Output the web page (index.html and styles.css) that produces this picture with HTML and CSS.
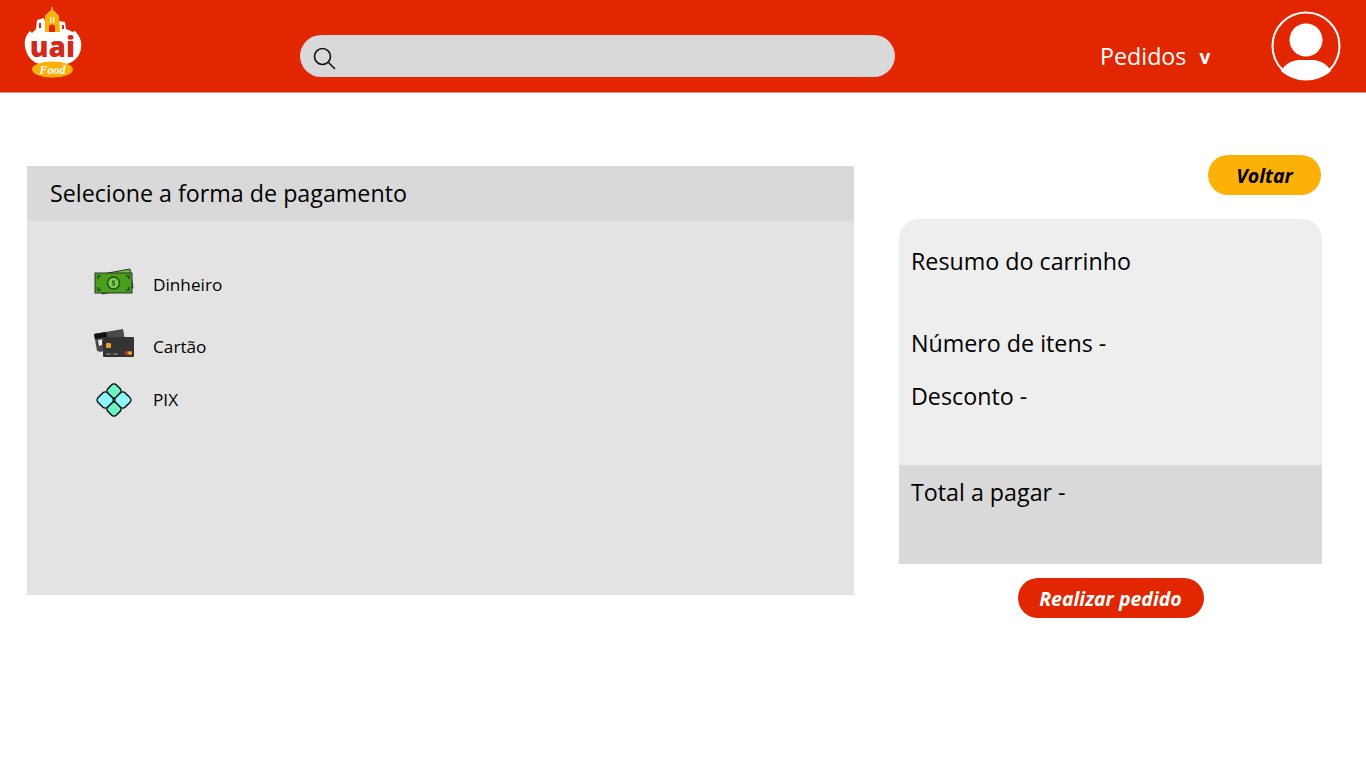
FILE: index.html
```html
<!DOCTYPE html>
<html lang="pt-BR">
<head>
    <meta charset="UTF-8">
    <title>UaiFood - Pagamento</title>
    <link rel="stylesheet" href="styles.css">
</head>
<body>
    <header class="topbar">
        <svg class="logo" width="60" height="74" viewBox="0 0 60 74">
            <!-- cidade + base branca -->
            <path fill="#fff" d="M1 42C0 35 2 30 6 26L8 28L12 24L13 15L20 13L21 17L21 11L25 7L27.500 5L27.500 2L28.500 2L28.500 5L31 7L35 11L35 16L41 17L42 24L47 26L48 27L51 26C56 31 58 37 57 43C56 53 48 61 28.500 61C9 61 3 52 1 42Z"/>
            <path fill="#fbb108" d="M21 11L28 4L35 11L36 27L21 27Z"/>
            <path fill="#e12600" d="M25 27L25 22.500A3 3 0 0 1 31 22.500L31 27Z"/>
            <path fill="#fff" d="M26 12H27.300V18H26ZM29 12H30.300V18H29Z"/>
            <path fill="#e12600" d="M15 18H17V23H15ZM38 20H40V24H38Z"/>
            <ellipse cx="28.500" cy="64.500" rx="20.500" ry="8" fill="#fbb108"/>
            <text class="logo-uai" x="28.500" y="52" text-anchor="middle">uai</text>
            <text class="logo-food" x="28.500" y="68.500" text-anchor="middle">Food</text>
        </svg>
        <div class="search">
            <svg width="24" height="24" viewBox="0 0 24 24" fill="none" stroke="#111" stroke-width="1.600">
                <circle cx="10.500" cy="10.500" r="8"/>
                <path d="M16.500 16.500L23 23"/>
            </svg>
        </div>
        <div class="orders">
            <span>Pedidos</span>
            <span class="orders-arrow">v</span>
        </div>
        <svg class="avatar" width="70" height="70" viewBox="0 0 70 70">
            <circle cx="35" cy="35" r="33.500" fill="none" stroke="#fff" stroke-width="2"/>
            <circle cx="35" cy="29" r="16.500" fill="#fff"/>
            <path fill="#fff" d="M10 60C14 53 20 50 27 49H43C50 50 56 53 60 60C54 66 45 68 35 68C25 68 16 66 10 60Z"/>
        </svg>
    </header>

    <main class="content">
        <section class="payment">
            <h2 class="payment-title">Selecione a forma de pagamento</h2>
            <ul class="payment-list">
                <li class="payment-item item-cash">
                    <svg width="40" height="28" viewBox="0 0 40 28">
                        <path fill="#6fbf3f" stroke="#333" d="M3 7L36 1L39 20L8 26Z"/>
                        <rect x="1" y="5" width="37" height="20" fill="#4a9e1e" stroke="#333"/>
                        <circle cx="19.500" cy="15" r="6" fill="#7ccb4a" stroke="#1f4d10" stroke-width="1.500"/>
                        <path fill="none" stroke="#1f4d10" stroke-width="1.500" d="M4 11V8H7M32 8H35V11M35 19V22H32M7 22H4V19"/>
                        <path fill="none" stroke="#1f4d10" d="M21 13H18.500V15H20.500V17H18"/>
                    </svg>
                    <span>Dinheiro</span>
                </li>
                <li class="payment-item item-card">
                    <svg width="42" height="30" viewBox="0 0 42 30">
                        <path fill="#4a4a4a" d="M1 6L30 1L32 12L8 24L4 23Z"/>
                        <path fill="#111" d="M1 6L13 4L14 9L2 11Z"/>
                        <path fill="#eee" d="M5 12L9 11.500L9 17L6 18Z"/>
                        <rect x="10" y="9" width="31" height="20" rx="1" fill="#333"/>
                        <rect x="13" y="15" width="5" height="5" rx="1" fill="#e8a12a"/>
                        <rect x="13" y="25" width="5" height="2" fill="#666"/>
                        <rect x="20" y="25" width="5" height="2" fill="#666"/>
                        <circle cx="34" cy="25" r="2" fill="#e0301e"/>
                        <circle cx="37" cy="25" r="2" fill="#f5a623"/>
                    </svg>
                    <span>Cartão</span>
                </li>
                <li class="payment-item item-pix">
                    <svg width="36" height="36" viewBox="0 0 36 36" stroke="#111" stroke-width="1.500">
                        <rect x="12" y="3" width="12" height="12" rx="3.500" fill="#6ff0c8" transform="rotate(45 18 9)"/>
                        <rect x="12" y="21" width="12" height="12" rx="3.500" fill="#6ff0c8" transform="rotate(45 18 27)"/>
                        <rect x="2.500" y="11.250" width="13.500" height="13.500" rx="3.500" fill="#8cf8fb" transform="rotate(45 9.250 18)"/>
                        <rect x="20" y="11.250" width="13.500" height="13.500" rx="3.500" fill="#8cf8fb" transform="rotate(45 26.750 18)"/>
                    </svg>
                    <span>PIX</span>
                </li>
            </ul>
        </section>

        <aside class="summary-col">
            <button class="btn btn-back">Voltar</button>
            <div class="summary">
                <div class="summary-body">
                    <p class="summary-title">Resumo do carrinho</p>
                    <p class="summary-line">Número de itens -</p>
                    <p class="summary-line">Desconto -</p>
                </div>
                <div class="summary-total">Total a pagar -</div>
            </div>
            <button class="btn btn-order">Realizar pedido</button>
        </aside>
    </main>
</body>
</html>
```

FILE: styles.css
```css
* {
    margin: 0;
    padding: 0;
    box-sizing: border-box;
}

body {
    font-family: "Open Sans", sans-serif;
    background-color: #fff;
    color: #000;
}

/* topo */
.topbar {
    height: 93px;
    background-color: #e12600;
    border-bottom: 1px solid #f0907a;
    display: flex;
    align-items: center;
    padding-left: 24px;
}

.logo {
    flex: none;
    align-self: flex-start;
    margin-top: 5px;
}

.logo-uai {
    font-family: "Open Sans", sans-serif;
    font-size: 28px;
    font-weight: 800;
    fill: #d4281a;
}

.logo-food {
    font-family: "Liberation Serif", serif;
    font-size: 12px;
    font-style: italic;
    font-weight: 700;
    fill: #fff;
}

.search {
    width: 595px;
    height: 42px;
    margin-left: 216px;
    margin-top: 20px;
    padding-left: 12px;
    border-radius: 21px;
    background-color: #d9d9d9;
    display: flex;
    align-items: center;
}

.search svg {
    margin-top: 3px;
}

.orders {
    width: 171px;
    margin-left: 205px;
    margin-top: 19px;
    display: flex;
    align-items: center;
    gap: 13px;
    color: #fff;
    font-size: 23.250px;
}

.orders-arrow {
    margin-top: 2px;
    font-size: 19px;
    font-weight: 700;
}

.avatar {
    flex: none;
}

/* conteudo */
.content {
    display: flex;
    align-items: flex-start;
    gap: 45px;
    padding: 62px 44px 0 27px;
}

.payment {
    width: 827px;
    height: 429px;
    margin-top: 11px;
    background-color: #e3e3e3;
}

.payment-title {
    height: 55px;
    padding: 11px 23px 0;
    background-color: #d9d9d9;
    font-size: 23.250px;
    font-weight: 400;
}

.payment-list {
    list-style: none;
    padding: 47px 0 0 66px;
}

.payment-item {
    display: flex;
    align-items: center;
    font-size: 17.200px;
}

.payment-item svg {
    flex: none;
}

.item-cash { padding-left: 1px; }
.item-cash span { margin-left: 19px; margin-top: 4px; }
.item-card { height: 30px; margin-top: 32px; }
.item-card span { margin-left: 18px; margin-top: 6px; }
.item-pix { height: 36px; margin-top: 24px; padding-left: 3px; }
.item-pix span { margin-left: 21px; margin-bottom: 2px; }

.summary-col {
    width: 423px;
    display: flex;
    flex-direction: column;
}

.btn {
    border: none;
    height: 40px;
    border-radius: 20px;
    font-family: "Open Sans", sans-serif;
    font-size: 19.500px;
    font-weight: 700;
    font-style: italic;
}

.btn-back {
    width: 113px;
    align-self: flex-end;
    margin-right: 1px;
    background-color: #fbb108;
    color: #000;
}

.btn-order {
    width: 186px;
    align-self: center;
    margin-top: 14px;
    background-color: #e12600;
    color: #fff;
}

.summary {
    margin-top: 24px;
    font-size: 23.250px;
}

.summary-body {
    height: 246px;
    padding: 26px 12px 0;
    border-radius: 20px 20px 0 0;
    background-color: #eee;
}

.summary-title {
    margin-bottom: 50px;
}

.summary-line {
    margin-bottom: 21px;
}

.summary-total {
    height: 99px;
    padding: 11px 12px 0;
    background-color: #d9d9d9;
}
```
